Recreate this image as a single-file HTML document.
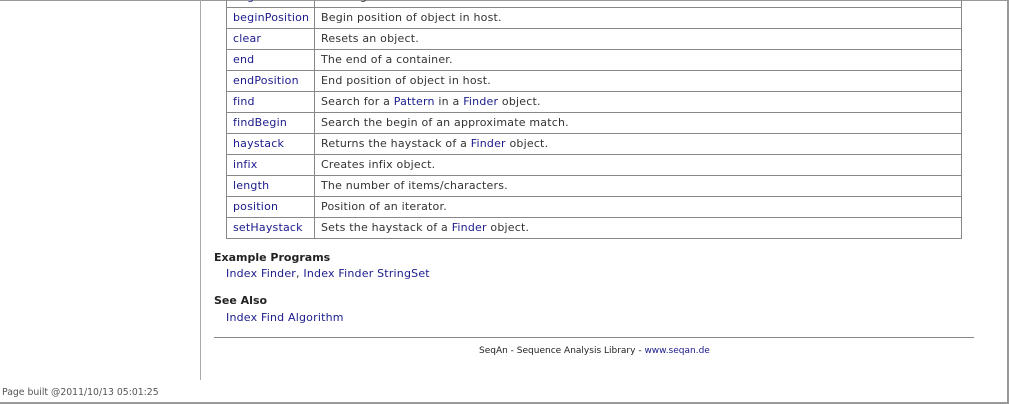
<!DOCTYPE html>
<html><head><style>
html,body{margin:0;padding:0;}
body{width:1009px;height:404px;overflow:hidden;position:relative;background:#fff;font-family:"DejaVu Sans","Liberation Sans",sans-serif;font-size:11px;color:#333;}
a{color:#1a1a8c;text-decoration:none;}
.frame{position:absolute;left:0;top:0;border-right:2px solid #999;border-bottom:2px solid #999;border-top:1px solid #999;box-sizing:border-box;width:1009px;height:404px;}
.side{position:absolute;left:200px;top:0;height:380px;border-left:1px solid #aaa;}
table{position:absolute;left:226px;top:-14px;width:736px;border-collapse:collapse;}
td{border:1px solid #888;height:21px;padding:0 0 0 6px;box-sizing:border-box;white-space:nowrap;line-height:20px;letter-spacing:0.2px;}
td.k{width:88px;}
h4{position:absolute;left:214px;margin:0;font-size:11px;font-weight:bold;color:#222;}
.l{position:absolute;left:226px;letter-spacing:0.2px;}
.hr{position:absolute;left:214px;top:337px;width:760px;border-top:1px solid #888;}
.foot{position:absolute;left:479px;top:346px;font-size:9px;color:#222;}
.built{position:absolute;left:2px;top:387px;font-size:9.3px;color:#555;}
</style></head><body>
<div class="frame"></div>
<div class="side"></div>
<table>
<tr><td class="k"><a>begin</a></td><td>The begin of a container.</td></tr>
<tr><td class="k"><a>beginPosition</a></td><td>Begin position of object in host.</td></tr>
<tr><td class="k"><a>clear</a></td><td>Resets an object.</td></tr>
<tr><td class="k"><a>end</a></td><td>The end of a container.</td></tr>
<tr><td class="k"><a>endPosition</a></td><td>End position of object in host.</td></tr>
<tr><td class="k"><a>find</a></td><td>Search for a <a>Pattern</a> in a <a>Finder</a> object.</td></tr>
<tr><td class="k"><a>findBegin</a></td><td>Search the begin of an approximate match.</td></tr>
<tr><td class="k"><a>haystack</a></td><td>Returns the haystack of a <a>Finder</a> object.</td></tr>
<tr><td class="k"><a>infix</a></td><td>Creates infix object.</td></tr>
<tr><td class="k"><a>length</a></td><td>The number of items/characters.</td></tr>
<tr><td class="k"><a>position</a></td><td>Position of an iterator.</td></tr>
<tr><td class="k"><a>setHaystack</a></td><td>Sets the haystack of a <a>Finder</a> object.</td></tr>
</table>
<h4 style="top:251px">Example Programs</h4>
<div class="l" style="top:267px"><a>Index Finder</a>, <a>Index Finder StringSet</a></div>
<h4 style="top:294px">See Also</h4>
<div class="l" style="top:311px"><a>Index Find Algorithm</a></div>
<div class="hr"></div>
<div class="foot">SeqAn - Sequence Analysis Library - <a>www.seqan.de</a></div>
<div class="built">Page built @2011/10/13 05:01:25</div>
</body></html>
